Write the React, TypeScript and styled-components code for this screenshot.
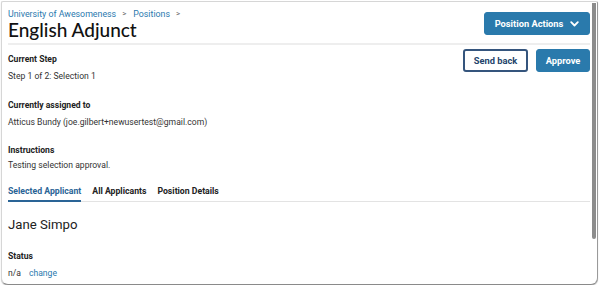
import styled, { createGlobalStyle } from 'styled-components'

const GlobalStyle = createGlobalStyle`
  html, body {
    margin: 0;
    padding: 0;
    background: #ffffff;
  }
  body {
    font-family: Roboto, "Liberation Sans", Arial, sans-serif;
    color: #222;
  }
`

const Frame = styled.div`
  position: relative;
  box-sizing: border-box;
  margin: 1px 0 0 1px;
  width: 597px;
  height: 284px;
  border: 1px solid #d6d6d6;
  border-bottom-color: #8a8a8a;
  border-right-color: #9a9a9a;
  border-radius: 2px 2px 7px 7px;
  box-shadow: 0 1px 1px rgba(0, 0, 0, 0.25);
  overflow: hidden;
  background: #fff;
`

const Thumb = styled.div`
  position: absolute;
  top: 1px;
  right: 1px;
  width: 4px;
  height: 236px;
  background: #8c8c8c;
  border-radius: 0 0 2px 2px;
`

const Page = styled.div`
  padding: 0 7px 0 6px;
`

const Header = styled.header`
  display: flex;
  justify-content: space-between;
  align-items: flex-start;
  padding-bottom: 2px;
  border-bottom: 2px solid #eeeeee;
`

const Breadcrumb = styled.nav`
  display: flex;
  align-items: center;
  gap: 6px;
  padding-top: 6px;
  font-size: 8.8px;
  line-height: 12px;
  color: #2a79ae;
`

const Crumb = styled.span`
  color: #2a79ae;
`

const Sep = styled.span`
  color: #666;
  font-size: 8px;
  margin-right: 1px;
`

const Title = styled.h1`
  margin: -1px 0 0;
  font-family: Lato, "Open Sans", sans-serif;
  font-weight: 500;
  font-size: 19px;
  line-height: 22px;
  color: #111;
`

const Button = styled.button<{ $variant?: 'primary' | 'outline' }>`
  display: inline-flex;
  align-items: center;
  justify-content: center;
  gap: 7px;
  box-sizing: border-box;
  height: 23px;
  padding: 0 8px;
  border-radius: 3px;
  white-space: nowrap;
  font-family: Roboto, "Liberation Sans", sans-serif;
  font-weight: 700;
  font-size: 9.3px;
  cursor: pointer;
  background: ${(p) => (p.$variant === 'outline' ? '#fff' : '#2a7aac')};
  color: ${(p) => (p.$variant === 'outline' ? '#23436b' : '#fff')};
  border: ${(p) => (p.$variant === 'outline' ? '2px solid #35557d' : '1px solid #2a7aac')};
`

const ActionsButton = styled(Button)`
  margin-top: 10px;
  width: 106px;
`

const Body = styled.div`
  display: flex;
  justify-content: space-between;
  align-items: flex-start;
`

const Info = styled.div`
  display: flex;
  flex-direction: column;
`

const ButtonRow = styled.div`
  display: flex;
  gap: 8px;
  margin-top: 4px;
`

const SendBack = styled(Button)`
  width: 65px;
`

const Approve = styled(Button)`
  width: 54px;
`

const Label = styled.div<{ $top: number }>`
  margin-top: ${(p) => p.$top}px;
  font-weight: 700;
  font-size: 8.6px;
  line-height: 12px;
  color: #222;
`

const Value = styled.div<{ $top: number }>`
  margin-top: ${(p) => p.$top}px;
  font-size: 8.6px;
  line-height: 12px;
  color: #333;
`

const Tabs = styled.div`
  display: flex;
  gap: 11px;
  margin-top: 14px;
  border-bottom: 1px solid #e3e3e3;
`

const Tab = styled.div<{ $active?: boolean }>`
  padding-bottom: 3px;
  font-weight: 700;
  font-size: 8.7px;
  line-height: 12px;
  color: ${(p) => (p.$active ? '#2a6496' : '#222')};
  border-bottom: 2px solid ${(p) => (p.$active ? '#2a6496' : 'transparent')};
  margin-bottom: -1px;
`

const Name = styled.div`
  margin-top: 14px;
  font-size: 13.2px;
  line-height: 18px;
  color: #222;
`

const StatusRow = styled.div`
  display: flex;
  gap: 8px;
  margin-top: 5px;
  font-size: 8.6px;
  line-height: 12px;
  color: #333;
`

const Link = styled.a`
  color: #2a79ae;
  text-decoration: none;
`

function Chevron() {
  return (
    <svg width="9" height="6" viewBox="0 0 9 6" aria-hidden="true">
      <path d="M1.2 1.2 L4.5 4.5 L7.8 1.2" fill="none" stroke="#fff" strokeWidth="1.8" strokeLinecap="round" strokeLinejoin="round" />
    </svg>
  )
}

export default function App() {
  return (
    <>
      <GlobalStyle />
      <Frame>
        <Page>
          <Header>
            <div>
              <Breadcrumb>
                <Crumb>University of Awesomeness</Crumb>
                <Sep>&gt;</Sep>
                <Crumb>Positions</Crumb>
                <Sep>&gt;</Sep>
              </Breadcrumb>
              <Title>English Adjunct</Title>
            </div>
            <ActionsButton>
              Position Actions
              <Chevron />
            </ActionsButton>
          </Header>
          <Body>
            <Info>
              <Label $top={8}>Current Step</Label>
              <Value $top={5}>Step 1 of 2: Selection 1</Value>
              <Label $top={17}>Currently assigned to</Label>
              <Value $top={5}>Atticus Bundy (joe.gilbert+newusertest@gmail.com)</Value>
              <Label $top={16}>Instructions</Label>
              <Value $top={3}>Testing selection approval.</Value>
            </Info>
            <ButtonRow>
              <SendBack $variant="outline">Send back</SendBack>
              <Approve>Approve</Approve>
            </ButtonRow>
          </Body>
          <Tabs>
            <Tab $active>Selected Applicant</Tab>
            <Tab>All Applicants</Tab>
            <Tab>Position Details</Tab>
          </Tabs>
          <Name>Jane Simpo</Name>
          <Label $top={16}>Status</Label>
          <StatusRow>
            <span>n/a</span>
            <Link href="#">change</Link>
          </StatusRow>
        </Page>
        <Thumb />
      </Frame>
    </>
  )
}
